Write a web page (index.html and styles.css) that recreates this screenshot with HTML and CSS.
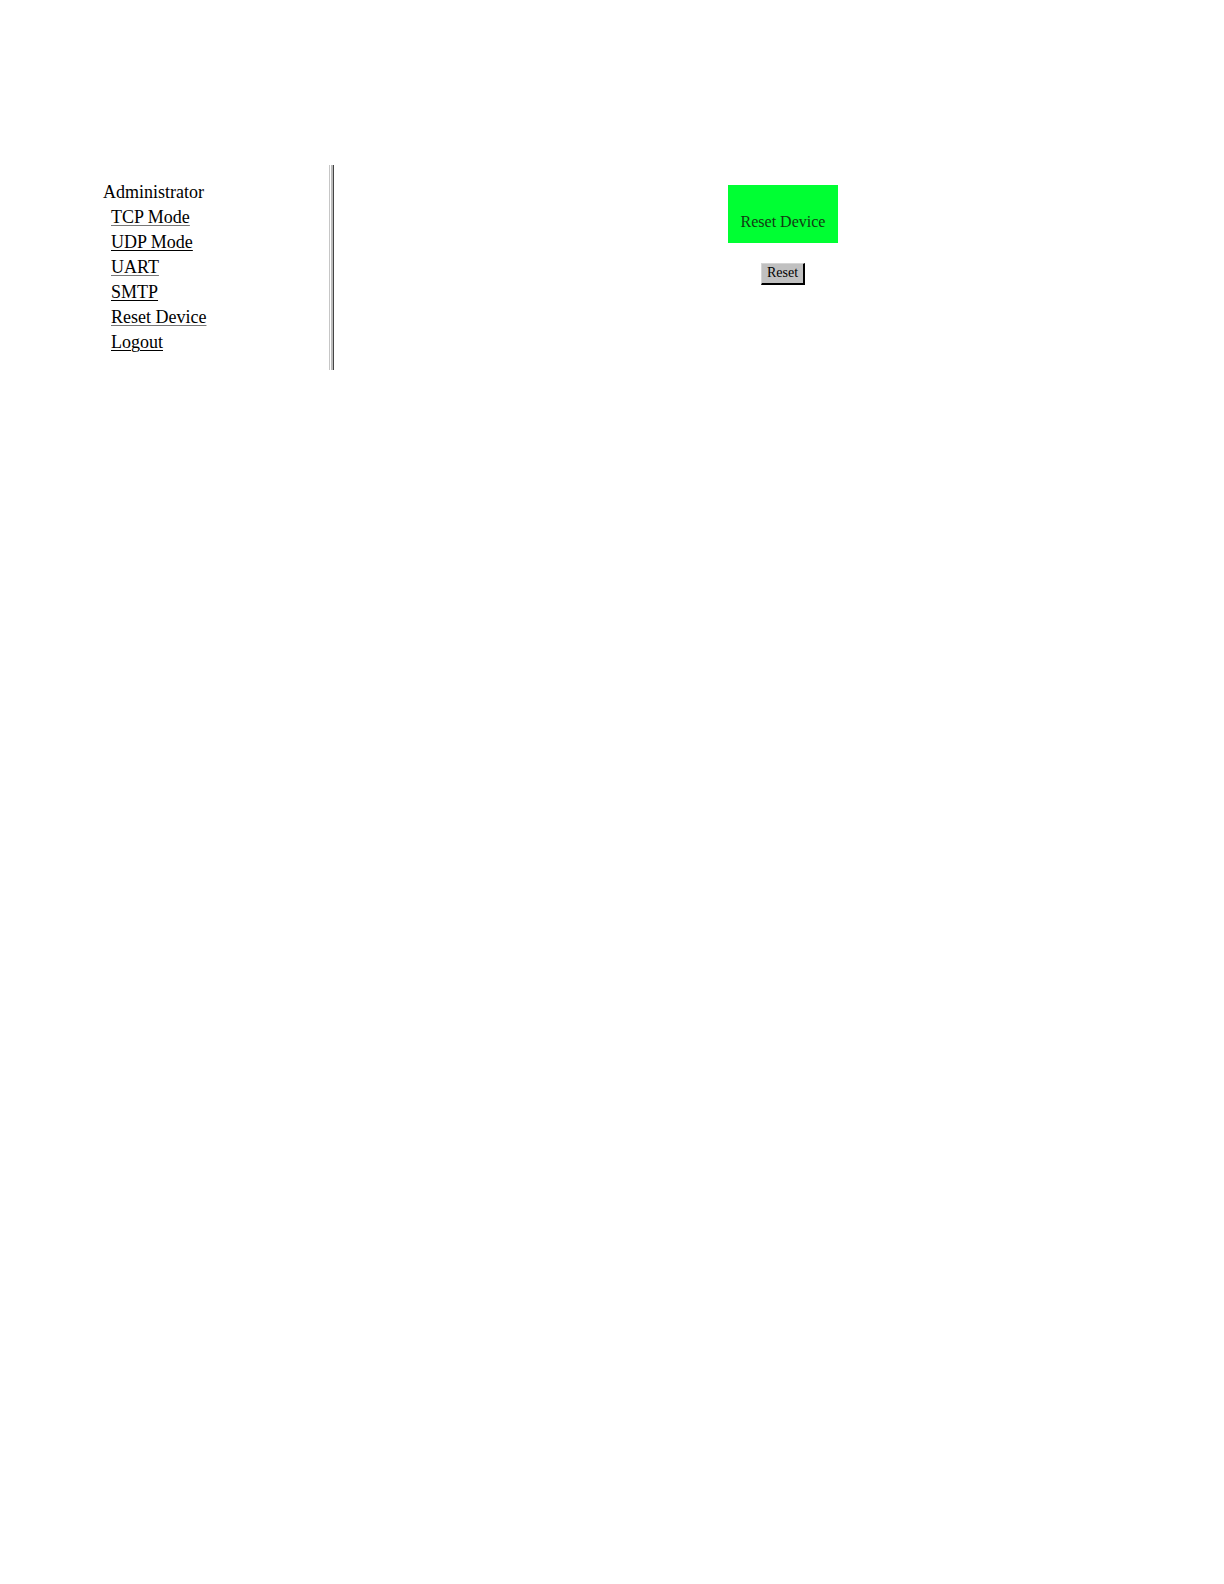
FILE: index.html
```
<!DOCTYPE html>
<html lang="en">
<head>
  <meta charset="UTF-8" />
  <title>Reset Device</title>
  <link rel="stylesheet" href="styles.css">
</head>
<body>

  <div class="frames">
    <!-- MENU -->
    <nav class="menu">
      <div class="menu-title">Administrator</div>
      <ul>
        <li><a href="#tcp">TCP Mode</a></li>
        <li><a href="#udp">UDP Mode</a></li>
        <li><a href="#uart">UART</a></li>
        <li><a href="#smtp">SMTP</a></li>
        <li><a href="#reset">Reset Device</a></li>
        <li><a href="#logout">Logout</a></li>
      </ul>
    </nav>

    <div class="divider"></div>

    <!-- CONTENT -->
    <main class="content">
      <h1>Reset Device</h1>
      <form>
        <button type="button">Reset</button>
      </form>
    </main>
  </div>

</body>
</html>
```

FILE: styles.css
```
body {
  margin: 0;
  padding-top: 165px;
  background: #fff;
  color: #000;
  font-family: "Liberation Serif", "Times New Roman", serif;
}
.frames {
  display: flex;
}
.menu {
  flex: 0 0 329px;
  box-sizing: border-box;
  padding: 15px 0 15px 103px;
  font-size: 18px;
  line-height: 25px;
}
.menu ul {
  margin: 0;
  padding: 0 0 0 8px;
  list-style: none;
}
.menu a {
  color: #000;
  text-decoration: underline 1px;
  text-underline-offset: 2px;
}
.menu li:nth-child(odd) a {
  text-decoration-color: #777;
}
.divider {
  flex: 0 0 3px;
  border-left: 1px solid #c6c6c6;
  border-right: 1px solid #444;
  background: linear-gradient(to right, #fff 1px, #bbb 1px);
}
.content {
  flex: 1;
  display: flex;
  flex-direction: column;
  align-items: center;
  padding: 20px 0 0 8px;
}
h1 {
  margin: 0 0 20px;
  padding: 27px 13px 11px;
  background: #00ff33;
  color: #123a12;
  font-size: 16px;
  font-weight: normal;
  line-height: 20px;
}
form {
  margin: 0;
}
button {
  display: block;
  padding: 1px 5px 2px;
  background: #c0c0c0;
  color: #000;
  border: 1px solid #d4d4d4;
  border-right: 2px solid #000;
  border-bottom: 2px solid #000;
  border-radius: 0;
  font-family: inherit;
  font-size: 14px;
  line-height: 16px;
}
```
